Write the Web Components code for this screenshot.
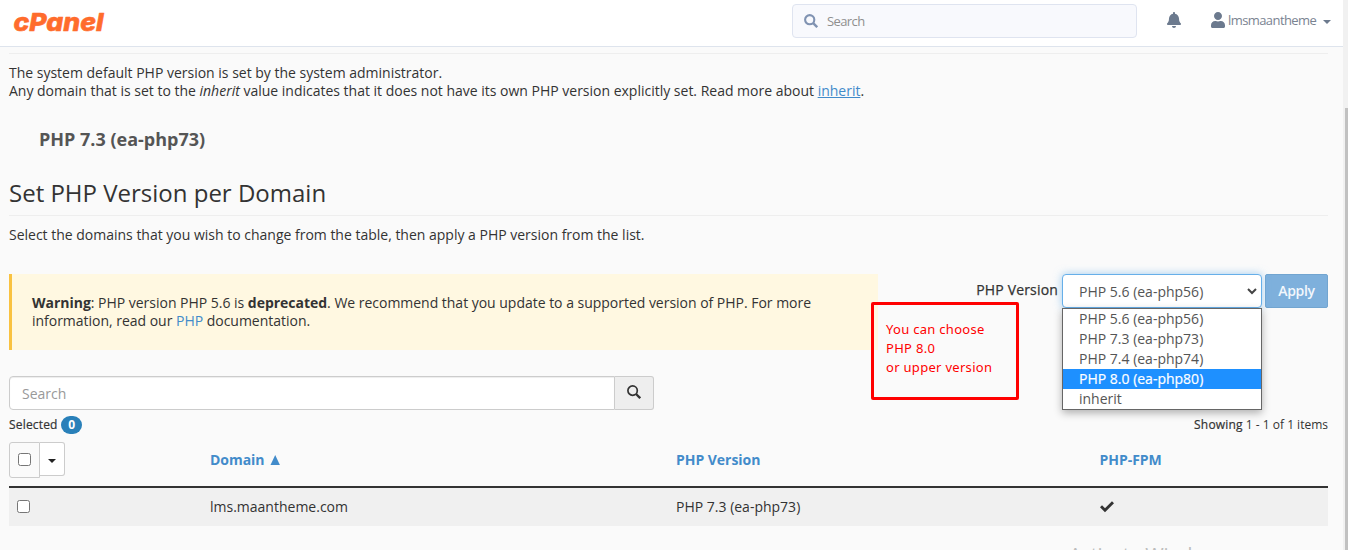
<!DOCTYPE html>
<html lang="en">
<head>
<meta charset="utf-8">
<title>MultiPHP Manager</title>
<style>
html,body{margin:0;height:550px;overflow:hidden}
body{font:14px/18px "Open Sans",sans-serif;color:#333;background:#fafafa}
</style>
</head>
<body>
<php-manager></php-manager>
<script>
function define(name, markup){
  const t=document.createElement('template');
  t.innerHTML=markup;
  customElements.define(name,class extends HTMLElement{
    constructor(){super();this.attachShadow({mode:'open'}).appendChild(t.content.cloneNode(true));}
  });
}

define('cp-logo',`<style>:host{display:block;width:92px;height:24px}svg{display:block;overflow:visible}text{font:italic 800 25px Inter,sans-serif;fill:#ff6c2c;stroke:#ff6c2c;stroke-width:.6;stroke-linejoin:round}</style>
<svg width="92" height="24"><text x="0.5" y="21.500" textLength="90" lengthAdjust="spacingAndGlyphs">cPanel</text></svg>`);

define('top-bar',`<style>
:host{display:flex;box-sizing:border-box;height:47px;background:#fff;border-bottom:1px solid #dee4ed;align-items:flex-start;padding-left:13px}
cp-logo{margin-top:9px}
.search{box-sizing:border-box;width:345px;height:34px;margin:4px 0 0 687px;border:1px solid #dfe4f0;border-radius:4px;background:#f8f9fd;display:flex;align-items:center;padding-left:11px;color:#8f8f8f;font-size:13px}
.search span{letter-spacing:-.6px}
.search svg{margin-right:9px}
.bell{margin:12px 0 0 30px}
.user{margin:12px 0 0 30px}
.name{font-size:13px;color:#7a8391;margin:11px 0 0 3px;width:88px;letter-spacing:-.58px;white-space:nowrap}
.caret{margin:20px 0 0 7px}
svg{display:block;flex:none}
</style>
<cp-logo></cp-logo>
<div class="search"><svg width="14" height="14" viewBox="0 0 14 14" fill="none" stroke="#8093b2"><circle cx="5.7" cy="5.7" r="4.6" stroke-width="2.1"/><path d="M9.2 9.2l4 4" stroke-width="2.4"/></svg><span>Search</span></div>
<svg class="bell" width="14" height="16" viewBox="0 0 448 512" fill="#6c7a8e"><path d="M224 512c35.3 0 64-28.700 64-64H160c0 35.300 28.700 64 64 64zm215.400-149.700c-19.300-20.800-55.500-52-55.500-154.300 0-77.700-54.500-139.900-128-155.200V32c0-17.700-14.300-32-32-32s-32 14.300-32 32v20.800C118.600 68.100 64.100 130.300 64.100 208c0 102.300-36.200 133.500-55.500 154.300-6 6.500-8.700 14.200-8.600 21.700.1 16.400 13 32 32.100 32h383.800c19.100 0 32-15.600 32.100-32 .1-7.500-2.600-15.200-8.600-21.700z"/></svg>
<svg class="user" width="14" height="16" viewBox="0 0 448 512" fill="#6c7a8e"><path d="M224 256c70.700 0 128-57.300 128-128S294.700 0 224 0 96 57.300 96 128s57.300 128 128 128zm89.600 32h-16.700c-22.200 10.200-46.900 16-72.900 16s-50.600-5.800-72.900-16h-16.700C60.200 288 0 348.200 0 422.400V464c0 26.500 21.500 48 48 48h352c26.500 0 48-21.500 48-48v-41.600c0-74.200-60.200-134.400-134.400-134.400z"/></svg>
<span class="name">lmsmaantheme</span>
<svg class="caret" width="8" height="4" fill="#6c7a8e"><path d="M0 0h8L4 4z"/></svg>`);

define('scroll-bar',`<style>:host{display:block;width:5px;height:550px;background:#f1f1f1;box-sizing:border-box;padding:108px 0 0 2px}i{display:block;height:442px;background:#c1c1c1}</style><i></i>`);

define('php-intro',`<style>
:host{display:block}
hr{border:0;border-top:1px solid #eee;margin:6px 0 0}
p{margin:10px 0 0;letter-spacing:-.006px}
a{color:#428bca;text-decoration:underline}
h3{font-size:18px;line-height:24px;color:#555;margin:27px 0 0 30px}
h2{font-weight:400;font-size:24px;line-height:30px;margin:27px 0 0;height:37px;border-bottom:1px solid #eee}
</style>
<hr><p>The system default PHP version is set by the system administrator.<br>Any domain that is set to the <em>inherit</em> value indicates that it does not have its own PHP version explicitly set. Read more about <a>inherit</a>.</p>
<h3>PHP 7.3 (ea-php73)</h3>
<h2>Set PHP Version per Domain</h2>
<p>Select the domains that you wish to change from the table, then apply a PHP version from the list.</p>`);

define('warning-callout',`<style>:host{display:block;box-sizing:border-box;width:869px;height:76px;background:#fff8e1;border-left:3px solid #f9c241;padding:20px;letter-spacing:-.02px}</style><slot></slot>`);

define('option-list',`<style>
:host{display:block;box-sizing:border-box;width:200px;height:102px;border:1px solid #666;background:#fff;box-shadow:0 3px 8px rgba(0,0,0,.3);color:#555}
div{height:20px;line-height:20px;padding-left:16px}
.on{background:#1e90ff;color:#fff;-webkit-text-stroke:.2px #fff}
</style><div>PHP 5.6 (ea-php56)</div><div>PHP 7.3 (ea-php73)</div><div>PHP 7.4 (ea-php74)</div><div class="on">PHP 8.0 (ea-php80)</div><div>inherit</div>`);

define('version-picker',`<style>
:host{display:flex;height:34px}
label{margin:7px 4px 0 0;letter-spacing:.17px;-webkit-text-stroke:.25px #333}
.select{position:relative;box-sizing:border-box;width:200px;height:34px;border:1px solid #66afe9;border-radius:4px;background:#fff;box-shadow:0 0 8px rgba(102,175,233,.6);color:#555;padding:8px 4px 0 16px;display:flex;justify-content:space-between}
.select svg{margin-top:5px}
option-list{position:absolute;left:-1px;top:33px;z-index:2}
button{all:unset;box-sizing:border-box;margin-left:3px;width:63px;height:34px;border:1px solid #72a5d0;border-radius:2px;background:#7eb0dc;color:#f2f7fc;font-weight:600;letter-spacing:-.3px;text-align:center}
</style><label>PHP Version</label><div class="select"><span>PHP 5.6 (ea-php56)</span><svg width="10" height="7" fill="none" stroke="#444" stroke-width="2"><path d="M1 1l4 4 4-4"/></svg><option-list></option-list></div><button>Apply</button>`);

define('red-note',`<style>:host{display:block;box-sizing:border-box;width:148px;height:98px;border:3px solid #f00;border-radius:2px;color:#f00;font:13px/19px "Noto Sans",sans-serif;letter-spacing:.3px;padding:15px 0 0 12px;white-space:nowrap}</style><slot></slot>`);

define('domain-search',`<style>
:host{display:flex;width:645px;height:34px}
div{box-sizing:border-box;border:1px solid #ccc;height:34px}
.f{width:606px;background:#fff;border-radius:4px 0 0 4px;box-shadow:inset 0 1px 1px rgba(0,0,0,.075);padding:8px 12px;color:#999}
.b{width:39px;border-left:0;background:#eee;border-radius:0 3px 3px 0;padding:8px 0 0 12px}
svg{display:block}
</style><div class="f">Search</div><div class="b"><svg width="14" height="14" fill="none" stroke="#333"><circle cx="5.6" cy="5.6" r="4.7" stroke-width="1.7"/><path d="M9 9l4.200 4.200" stroke-width="2.300"/></svg></div>`);

define('check-box',`<style>:host{display:block;box-sizing:border-box;width:13px;height:13px;border:1px solid #767676;border-radius:2.500px;background:#fff}</style>`);

define('table-status',`<style>:host{display:flex;justify-content:space-between;font-size:12px;line-height:18px;height:18px}
b{display:inline-block;width:21px;height:18px;border-radius:9px;background:#2980b9;color:#fff;text-align:center;margin-left:3.500px;vertical-align:top}i{font-style:normal;letter-spacing:.18px;-webkit-text-stroke:.2px #333}</style>
<span><i>Selected</i><b>0</b></span><span><i>Showing</i> 1 - 1 of 1 items</span>`);

define('domain-table',`<style>
:host{display:block}
.h,.r{display:grid;grid-template-columns:201px 466px 423.500px 1fr}
.h{height:44px;border-bottom:2px solid #333;color:#428bca;font-weight:700}
.h>span{padding-top:9px;letter-spacing:-.04px}
.r{height:38px;background:#f0f0f0;align-items:center}
.r check-box{margin:0 0 1px 8px}
.g{display:flex}
.a,.c{box-sizing:border-box;border:1px solid #ccc}
.a{width:31px;height:36px;border-radius:3px 0 0 3px;padding:10px 0 0 8px}
.c{width:25px;height:34px;border-left:0;background:#fff;border-radius:0 3px 3px 0;padding:16px 0 0 8px}
svg{display:block}
.s{display:inline-block;margin-left:6px}
</style>
<div class="h"><div class="g"><div class="a"><check-box></check-box></div><div class="c"><svg width="8" height="4" fill="#222"><path d="M0 0h8L4 4z"/></svg></div></div><span>Domain<svg class="s" width="12" height="10" fill="#428bca"><path d="M0.500 10L5.200 0l4.700 10z"/></svg></span><span>PHP Version</span><span>PHP-FPM</span></div>
<div class="r"><check-box></check-box><span>lms.maantheme.com</span><span>PHP 7.3 (ea-php73)</span><svg width="14" height="12" fill="none" stroke="#333" stroke-width="2.900"><path d="M1 5.200l4 4L13 1.300"/></svg></div>`);

define('os-watermark',`<style>:host{display:block;font:20px/24px "Open Sans",sans-serif;color:#bdbdbd;white-space:nowrap;letter-spacing:-.3px}</style><slot></slot>`);

define('php-manager',`<style>
:host{display:flex;height:550px;overflow:hidden;position:relative}
.page{width:1343px;flex:none}
main{padding:0 15px 0 9px}
.row{display:flex;justify-content:space-between;margin-top:30px}
domain-search{margin-top:26px}
table-status{margin-top:6px}
domain-table{margin-top:8px}
a{color:#428bca}
red-note{position:absolute;left:871px;top:302px}
os-watermark{position:absolute;left:1069px;top:543px}
</style>
<div class="page"><top-bar></top-bar><main>
<php-intro></php-intro>
<div class="row"><warning-callout><b>Warning</b>: PHP version PHP 5.6 is <b>deprecated</b>. We recommend that you update to a supported version of PHP. For more information, read our <a>PHP</a> documentation.</warning-callout><version-picker></version-picker></div>
<domain-search></domain-search><table-status></table-status><domain-table></domain-table>
</main></div><scroll-bar></scroll-bar>
<red-note>You can choose<br>PHP 8.0<br>or upper version</red-note>
<os-watermark>Activate Windows</os-watermark>`);
</script>
</body>
</html>
